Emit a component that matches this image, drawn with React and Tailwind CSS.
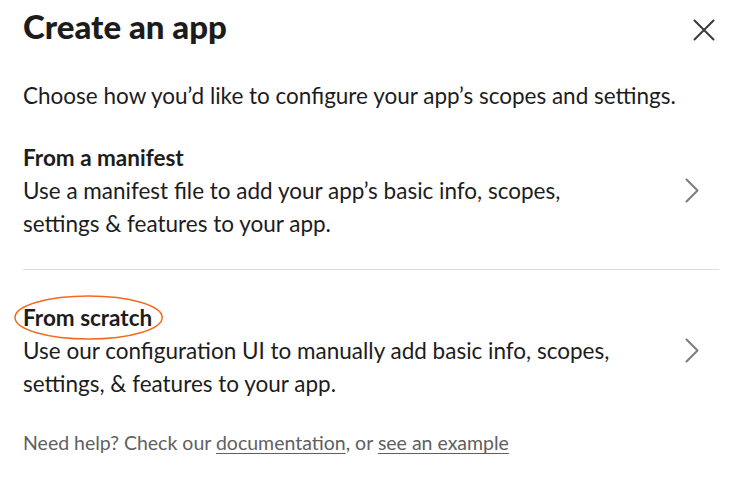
// Create an app modal (Slack-style)

function Chevron() {
  return (
    <svg className="w-[14px] h-[25px] mr-[20px] shrink-0" viewBox="0 0 14 25" fill="none">
      <polyline points="1.5,1.5 12.5,12.5 1.5,23.5" stroke="#7c7c7c" strokeWidth="2" strokeLinecap="round" strokeLinejoin="round" />
    </svg>
  );
}

function Option({ title, children, circled }) {
  return (
    <div className="flex items-center justify-between">
      <div className="w-[600px]">
        <div className="text-[22.5px] leading-[33px] font-bold text-[#1d1c1d]">
          <span className="relative inline-block">
            {title}
            {circled && (
              <svg
                className="absolute -left-[9px] -top-[6px] w-[calc(100%+20px)] h-[calc(100%+12px)] pointer-events-none"
                viewBox="0 0 150 44"
                preserveAspectRatio="none"
              >
                <ellipse cx="75" cy="22" rx="74" ry="21" fill="none" stroke="#f26a21" strokeWidth="1.5" />
              </svg>
            )}
          </span>
        </div>
        <p className="text-[22.5px] leading-[33px] text-[#1d1c1d]">{children}</p>
      </div>
      <Chevron />
    </div>
  );
}

export default function App() {
  return (
    <div
      className="w-[739px] h-[484px] bg-white pt-[6px] pl-[23px] pr-[20px] overflow-hidden"
      style={{ fontFamily: "Lato, 'Noto Sans', sans-serif" }}
    >
      {/* Header */}
      <div className="flex items-center justify-between h-[40px]">
        <h1 className="text-[33px] leading-[40px] font-black text-[#1d1c1d]">Create an app</h1>
        <button className="mr-[4px] mt-[8px]">
          <svg className="w-[22px] h-[22px]" viewBox="0 0 22 22" fill="none">
            <path d="M1.5 1.5 L20.5 20.5 M20.5 1.5 L1.5 20.5" stroke="#3b3b3b" strokeWidth="2" strokeLinecap="round" />
          </svg>
        </button>
      </div>

      <p className="mt-[33px] text-[22.5px] leading-[33px] text-[#1d1c1d]">
        Choose how you’d like to configure your app’s scopes and settings.
      </p>

      <div className="mt-[29px]">
        <Option title="From a manifest">
          Use a manifest file to add your app’s basic info, scopes, settings &amp; features to your app.
        </Option>
      </div>

      <div className="mt-[29px] h-px bg-[#dddddd]" />

      <div className="mt-[31px]">
        <Option title="From scratch" circled>
          Use our configuration UI to manually add basic info, scopes, settings, &amp; features to your app.
        </Option>
      </div>

      {/* Footer */}
      <p className="mt-[29px] text-[19.5px] leading-[27px] text-[#616061]">
        Need help? Check our <a className="underline underline-offset-[3px]">documentation</a>, or{" "}
        <a className="underline underline-offset-[3px]">see an example</a>
      </p>
    </div>
  );
}
